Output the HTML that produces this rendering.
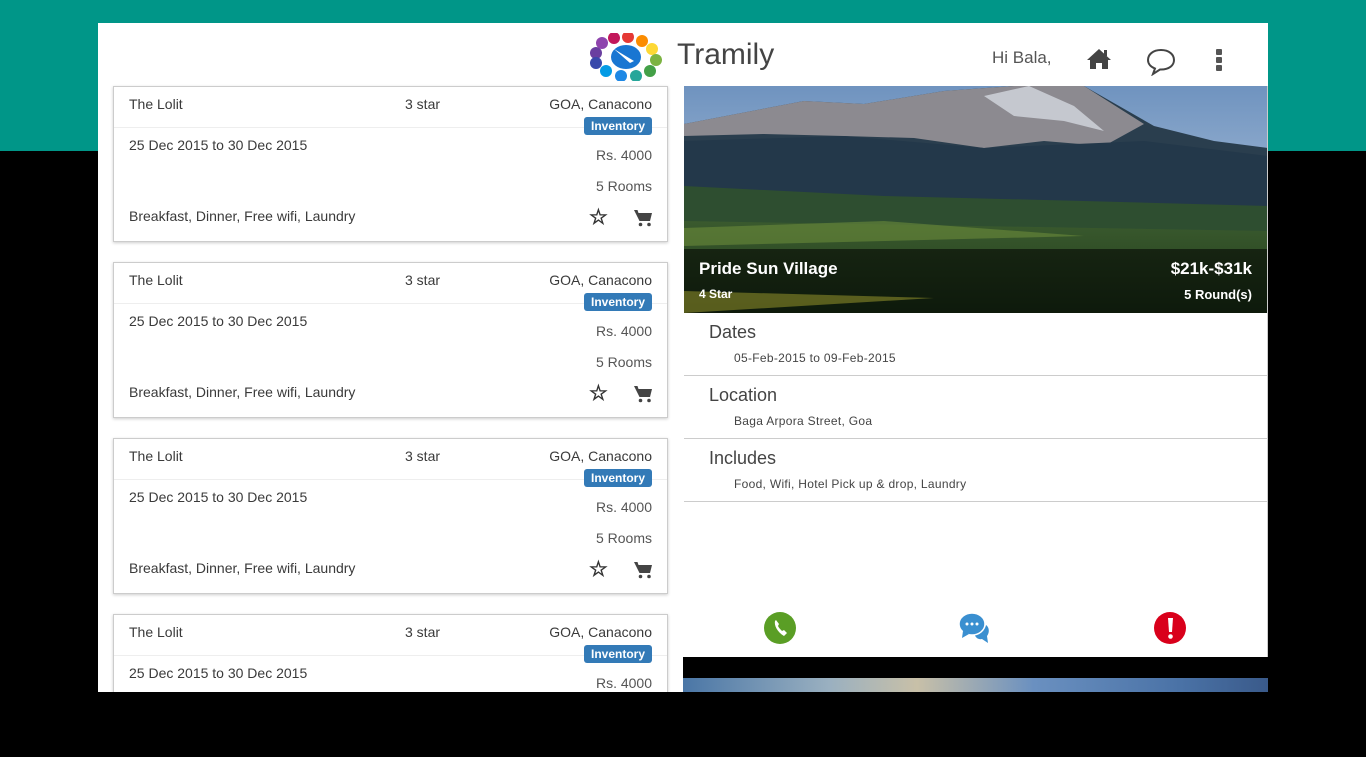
<!DOCTYPE html>
<html><head><meta charset="utf-8"><style>
*{margin:0;padding:0;box-sizing:border-box}
body{width:1366px;height:757px;background:#000;position:relative;overflow:hidden;font-family:"Liberation Sans",Arial,sans-serif;color:#444}
.teal{position:absolute;left:0;top:0;width:1366px;height:151px;background:#009688}
.wrap{position:absolute;left:98px;top:23px;width:1170px;height:669px;background:#fff;overflow:hidden}
.card{position:absolute;left:15px;width:555px;height:156px;border:1px solid #ccc;box-shadow:0 1px 3px rgba(0,0,0,.2);background:#fff;font-size:14px;color:#3a3a3a}
.card .hd{height:41px;border-bottom:1px solid #eee;position:relative}
.card span{position:absolute}
.badge{position:absolute;right:15px;top:30px;background:#337ab7;color:#fff;font-weight:bold;font-size:12px;padding:2px 7px;border-radius:3px}
.sec{position:absolute;left:586px;width:584px;border-bottom:1px solid #ccc}
.sec h3{font-weight:normal;font-size:18px;color:#444;position:absolute;left:25px;top:9px}
.sec p{font-size:12px;position:absolute;left:50px;top:38px;letter-spacing:.3px}
</style></head><body>
<div class="teal"></div>
<div class="wrap">
 <svg style="position:absolute;left:488px;top:10px" width="80" height="48" viewBox="0 0 80 48">
  <g>
   <circle cx="10" cy="20" r="6" fill="#6a3fa0"/><circle cx="16" cy="10" r="6" fill="#8e44ad"/><circle cx="28" cy="5" r="6" fill="#c2185b"/>
   <circle cx="42" cy="4" r="6" fill="#e53935"/><circle cx="56" cy="8" r="6" fill="#fb8c00"/><circle cx="66" cy="16" r="6" fill="#fdd835"/>
   <circle cx="70" cy="27" r="6" fill="#7cb342"/><circle cx="64" cy="38" r="6" fill="#43a047"/><circle cx="50" cy="43" r="6" fill="#26a69a"/>
   <circle cx="35" cy="43" r="6" fill="#1e88e5"/><circle cx="20" cy="38" r="6" fill="#039be5"/><circle cx="10" cy="30" r="6" fill="#3949ab"/>
   <ellipse cx="40" cy="24" rx="15" ry="12" fill="#1976d2"/><path d="M28 16 L48 28 L44 30 Z" fill="#fff"/>
  </g>
 </svg>
 <div style="position:absolute;left:579px;top:15px;font-size:30px;color:#444">Tramily</div>
 <div style="position:absolute;left:894px;top:25px;font-size:17px;color:#555">Hi Bala,</div>
 <svg style="position:absolute;left:988px;top:25px" width="26" height="22" viewBox="0 0 26 22"><path d="M13 1 L1 12 H4 V21 H10 V15 H16 V21 H22 V12 H25 Z" fill="#444"/><rect x="18" y="2" width="3" height="6" fill="#444"/></svg>
 <svg style="position:absolute;left:1048px;top:25px" width="30" height="28" viewBox="0 0 30 28"><path d="M15 2 C7 2 2 6.5 2 12 C2 16 5 19 9 20.5 L7 26 L14 21.5 C15 21.5 15 21.5 15 21.5 C23 21.5 28 17.5 28 12 C28 6.5 23 2 15 2 Z" fill="none" stroke="#444" stroke-width="2"/></svg>
 <div style="position:absolute;left:1118px;top:26px;width:6px">
  <div style="width:6px;height:6px;background:#555;border-radius:1px;margin-bottom:2px"></div><div style="width:6px;height:6px;background:#555;border-radius:1px;margin-bottom:2px"></div><div style="width:6px;height:6px;background:#555;border-radius:1px"></div></div>

 <div class="card" style="top:63px"><div class="hd"><span style="left:15px;top:9px">The Lolit</span><span style="left:291px;top:9px">3 star</span><span style="right:15px;top:9px">GOA, Canacono</span><div class="badge">Inventory</div></div>
  <span style="left:15px;top:50px">25 Dec 2015 to 30 Dec 2015</span><span style="right:15px;top:60px;color:#555">Rs. 4000</span><span style="right:15px;top:91px;color:#555">5 Rooms</span><span style="left:15px;top:121px">Breakfast, Dinner, Free wifi, Laundry</span>
  <span style="left:475px;top:118px;font-size:21px;color:#333;font-weight:bold">☆</span>
  <svg style="position:absolute;left:520px;top:122px" width="18" height="18" viewBox="0 0 18 18"><path d="M0 1 H3.5 L4.5 4 H18 L16 12 H5.5 Z" fill="#444"/><circle cx="6.5" cy="15.5" r="1.8" fill="#444"/><circle cx="15" cy="15.5" r="1.8" fill="#444"/></svg></div>
 <div class="card" style="top:239px"><div class="hd"><span style="left:15px;top:9px">The Lolit</span><span style="left:291px;top:9px">3 star</span><span style="right:15px;top:9px">GOA, Canacono</span><div class="badge">Inventory</div></div>
  <span style="left:15px;top:50px">25 Dec 2015 to 30 Dec 2015</span><span style="right:15px;top:60px;color:#555">Rs. 4000</span><span style="right:15px;top:91px;color:#555">5 Rooms</span><span style="left:15px;top:121px">Breakfast, Dinner, Free wifi, Laundry</span>
  <span style="left:475px;top:118px;font-size:21px;color:#333;font-weight:bold">☆</span>
  <svg style="position:absolute;left:520px;top:122px" width="18" height="18" viewBox="0 0 18 18"><path d="M0 1 H3.5 L4.5 4 H18 L16 12 H5.5 Z" fill="#444"/><circle cx="6.5" cy="15.5" r="1.8" fill="#444"/><circle cx="15" cy="15.5" r="1.8" fill="#444"/></svg></div>
 <div class="card" style="top:415px"><div class="hd"><span style="left:15px;top:9px">The Lolit</span><span style="left:291px;top:9px">3 star</span><span style="right:15px;top:9px">GOA, Canacono</span><div class="badge">Inventory</div></div>
  <span style="left:15px;top:50px">25 Dec 2015 to 30 Dec 2015</span><span style="right:15px;top:60px;color:#555">Rs. 4000</span><span style="right:15px;top:91px;color:#555">5 Rooms</span><span style="left:15px;top:121px">Breakfast, Dinner, Free wifi, Laundry</span>
  <span style="left:475px;top:118px;font-size:21px;color:#333;font-weight:bold">☆</span>
  <svg style="position:absolute;left:520px;top:122px" width="18" height="18" viewBox="0 0 18 18"><path d="M0 1 H3.5 L4.5 4 H18 L16 12 H5.5 Z" fill="#444"/><circle cx="6.5" cy="15.5" r="1.8" fill="#444"/><circle cx="15" cy="15.5" r="1.8" fill="#444"/></svg></div>
 <div class="card" style="top:591px"><div class="hd"><span style="left:15px;top:9px">The Lolit</span><span style="left:291px;top:9px">3 star</span><span style="right:15px;top:9px">GOA, Canacono</span><div class="badge">Inventory</div></div>
  <span style="left:15px;top:50px">25 Dec 2015 to 30 Dec 2015</span><span style="right:15px;top:60px;color:#555">Rs. 4000</span></div>

 <svg style="position:absolute;left:586px;top:63px" width="584" height="227" viewBox="0 0 584 227">
  <defs><linearGradient id="sk" x1="0" y1="0" x2="0" y2="1"><stop offset="0" stop-color="#6f93bf"/><stop offset="1" stop-color="#c8d6e6"/></linearGradient>
  <linearGradient id="gr" x1="0" y1="0" x2="0" y2="1"><stop offset="0" stop-color="#3a5a2e"/><stop offset="1" stop-color="#1f3a1a"/></linearGradient></defs>
  <rect width="584" height="227" fill="url(#sk)"/>
  <path d="M0 38 L120 15 L180 18 L260 5 L330 0 L400 0 L470 40 L530 55 L584 62 L584 227 L0 227 Z" fill="#2a3e4e"/>
  <path d="M0 38 L120 15 L180 18 L260 5 L330 0 L400 0 L460 38 L420 60 L360 55 L300 62 L230 52 L160 50 L80 48 L0 50 Z" fill="#8c8a90"/>
  <path d="M300 10 L345 0 L390 20 L420 45 L380 35 L330 30 Z" fill="#dde2ea" opacity=".7"/>
  <path d="M0 55 L160 50 L300 62 L460 55 L584 70 L584 227 L0 227 Z" fill="#23384a"/>
  <path d="M0 100 L200 110 L400 115 L584 120 L584 227 L0 227 Z" fill="#2e4e30"/>
  <path d="M0 135 L584 145 L584 227 L0 227 Z" fill="url(#gr)"/>
  <path d="M0 142 L200 135 L400 150 L0 160 Z" fill="#6a8a3a" opacity=".6"/>
  <rect y="163" width="584" height="64" fill="#000" opacity=".55"/>
  <path d="M0 205 L250 212 L0 227 Z" fill="#8a8a2a" opacity=".6"/>
  <text x="15" y="188" font-family="Liberation Sans" font-weight="bold" font-size="17" fill="#fff">Pride Sun Village</text>
  <text x="568" y="188" text-anchor="end" font-family="Liberation Sans" font-weight="bold" font-size="17" fill="#fff">$21k-$31k</text>
  <text x="15" y="212" font-family="Liberation Sans" font-weight="bold" font-size="12" fill="#fff">4 Star</text>
  <text x="568" y="213" text-anchor="end" font-family="Liberation Sans" font-weight="bold" font-size="13" fill="#fff">5 Round(s)</text>
 </svg>
 <div class="sec" style="top:290px;height:63px"><h3>Dates</h3><p>05-Feb-2015 to 09-Feb-2015</p></div>
 <div class="sec" style="top:353px;height:63px"><h3>Location</h3><p>Baga Arpora Street, Goa</p></div>
 <div class="sec" style="top:416px;height:63px"><h3>Includes</h3><p>Food, Wifi, Hotel Pick up &amp; drop, Laundry</p></div>
 <div style="position:absolute;left:1169px;top:63px;width:1px;height:571px;background:#ccc"></div>
 <svg style="position:absolute;left:666px;top:589px" width="33" height="33" viewBox="0 0 33 33"><circle cx="16" cy="16" r="16" fill="#5a9e25"/><path d="M11 9 C10 13 13 20 20 24 L23 21 L20 18 L18 19 C16 17 15 16 14 14 L15 12 L12 8 Z" fill="#fff"/></svg>
 <svg style="position:absolute;left:860px;top:588px" width="34" height="34" viewBox="0 0 34 34"><path d="M16 20 C20 22 27 20 28 14 C31 16 32 21 29 25 L30 32 L24 28 C20 29 16 26 16 20 Z" fill="#3a8fd0"/><ellipse cx="14" cy="13" rx="13" ry="11" fill="#3a8fd0" stroke="#fff" stroke-width="1.5"/><path d="M5 20 L4 27 L11 23 Z" fill="#3a8fd0"/><circle cx="9" cy="13" r="1.5" fill="#fff"/><circle cx="14" cy="13" r="1.5" fill="#fff"/><circle cx="19" cy="13" r="1.5" fill="#fff"/></svg>
 <svg style="position:absolute;left:1056px;top:589px" width="33" height="33" viewBox="0 0 33 33"><circle cx="16" cy="16" r="16" fill="#d9001b"/><path d="M14 6 H19 L18 20 H15 Z" fill="#fff"/><circle cx="16.5" cy="24.5" r="2.3" fill="#fff"/></svg>
 <div style="position:absolute;left:585px;top:634px;width:585px;height:21px;background:#000"></div>
 <div style="position:absolute;left:585px;top:655px;width:585px;height:14px;background:linear-gradient(90deg,#4a76a6,#9ab0c0 25%,#c8c0a8 40%,#6a90c0 60%,#4a72a6 85%,#3a5a8a)"></div>
</div>
</body></html>
